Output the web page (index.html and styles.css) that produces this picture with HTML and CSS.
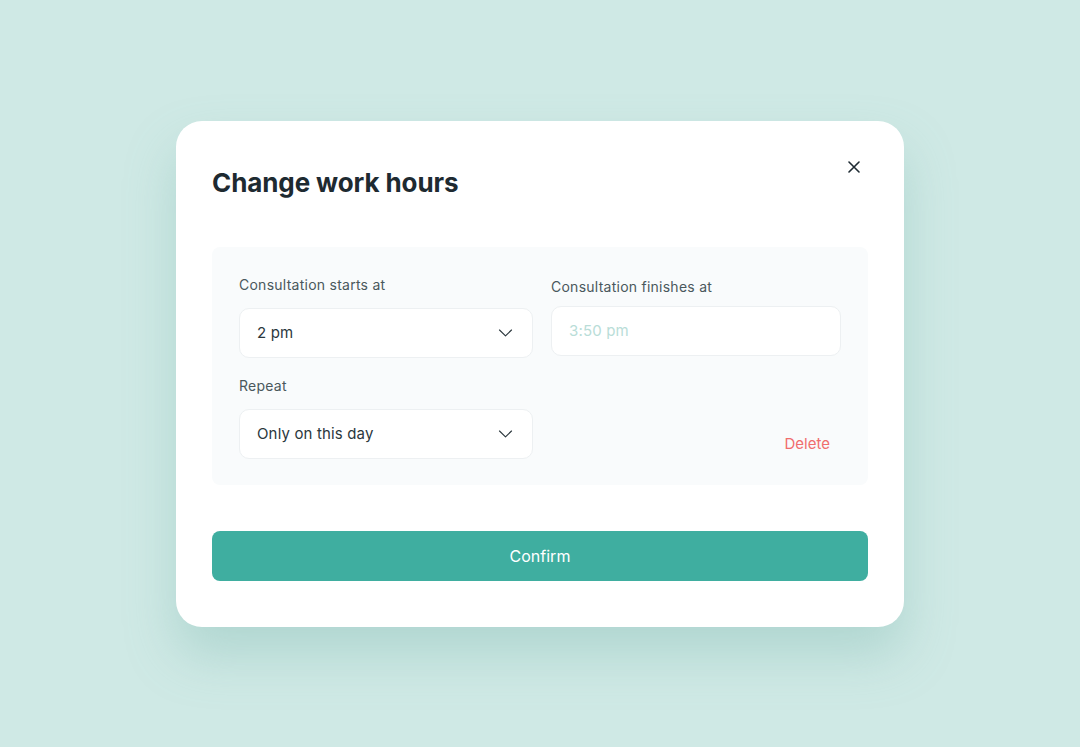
FILE: index.html
```
<!DOCTYPE html>
<html lang="en">
<head>
<meta charset="utf-8">
<title>Change work hours</title>
<link rel="stylesheet" href="styles.css">
</head>
<body>
<div class="stage">
  <div class="modal">
    <h1 class="title">Change work hours</h1>
    <button class="close" aria-label="Close">
      <svg width="12" height="12" viewBox="0 0 12 12"><path d="M1 1L11 11M11 1L1 11" stroke="#1f2b33" stroke-width="1.6" stroke-linecap="round"/></svg>
    </button>
    <div class="panel">
      <div class="field">
        <div class="label">Consultation starts at</div>
        <div class="input">
          <span class="value">2 pm</span>
          <svg class="chev" width="15" height="8" viewBox="0 0 15 8"><path d="M1.5 1L7.5 6.8L13.5 1" fill="none" stroke="#2b373d" stroke-width="1.1" stroke-linecap="round" stroke-linejoin="round"/></svg>
        </div>
      </div>
      <div class="field field-alt">
        <div class="label">Consultation finishes at</div>
        <div class="input">
          <span class="placeholder">3:50 pm</span>
        </div>
      </div>
      <div class="field">
        <div class="label">Repeat</div>
        <div class="input">
          <span class="value">Only on this day</span>
          <svg class="chev" width="15" height="8" viewBox="0 0 15 8"><path d="M1.5 1L7.5 6.8L13.5 1" fill="none" stroke="#2b373d" stroke-width="1.1" stroke-linecap="round" stroke-linejoin="round"/></svg>
        </div>
      </div>
      <div class="delete">Delete</div>
    </div>
    <button class="confirm">Confirm</button>
  </div>
</div>
</body>
</html>
```

FILE: styles.css
```
* { box-sizing: border-box; }
html, body { margin: 0; padding: 0; }
body {
  background: #cfe9e5;
  font-family: "Inter", "Noto Sans", sans-serif;
  color: #24323a;
}
.stage {
  width: 1080px;
  height: 747px;
  display: flex;
  align-items: center;
  justify-content: center;
}
.modal {
  position: relative;
  width: 728px;
  height: 506px;
  background: #ffffff;
  border-radius: 26px;
  padding: 46px 36px 45px 36px;
  box-shadow: 0 28px 50px rgba(120, 180, 172, 0.35);
  display: flex;
  flex-direction: column;
}
.title {
  margin: 0;
  font-size: 26px;
  line-height: 32px;
  font-weight: 700;
  color: #1e2a31;
  letter-spacing: -0.1px;
}
.close {
  position: absolute;
  top: 40px;
  right: 44px;
  width: 12px;
  height: 12px;
  padding: 0;
  border: 0;
  background: none;
  display: flex;
}
.panel {
  margin-top: 48px;
  background: #f9fbfc;
  border-radius: 8px;
  padding: 28px 26px 26px 27px;
  display: grid;
  grid-template-columns: 294px 290px;
  column-gap: 18px;
  row-gap: 18px;
}
.field {
  display: flex;
  flex-direction: column;
  gap: 13px;
}
.field-alt {
  padding-top: 2px;
  gap: 9px;
}
.label {
  font-size: 14px;
  line-height: 20px;
  color: #4a585c;
  letter-spacing: 0.25px;
}
.input {
  height: 50px;
  background: #ffffff;
  border: 1px solid #edf0f2;
  border-radius: 10px;
  padding: 0 19px 0 17px;
  display: flex;
  align-items: center;
  justify-content: space-between;
}
.value {
  font-size: 15px;
  color: #2b373d;
  letter-spacing: 0.15px;
}
.placeholder {
  font-size: 15px;
  color: #b9ddd8;
  letter-spacing: 0.15px;
}
.chev { flex: none; }
.delete {
  align-self: end;
  justify-self: end;
  margin: 0 11px 5px 0;
  font-size: 15px;
  line-height: 20px;
  color: #f06d6d;
}
.confirm {
  margin-top: 46px;
  height: 50px;
  border: 0;
  border-radius: 8px;
  background: #3faea0;
  color: #ffffff;
  font-family: inherit;
  font-size: 16px;
  font-weight: 400;
}
```
